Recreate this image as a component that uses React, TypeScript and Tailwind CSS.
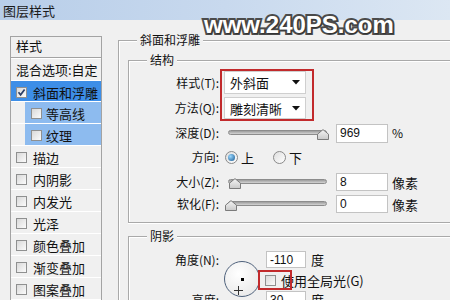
const SIDE_ITEMS = ["描边", "内阴影", "内发光", "光泽", "颜色叠加", "渐变叠加", "图案叠加"];

function Check({ checked }: { checked?: boolean }) {
  return (
    <span className="flex h-[11px] w-[11px] shrink-0 items-center justify-center border border-[#8f9090] bg-gradient-to-br from-[#d9d9d9] to-[#fbfbfb]">
      {checked && (
        <svg width="9" height="9" viewBox="0 0 9 9">
          <path d="M1.5 4.3 L3.6 6.8 L7.6 1.6" fill="none" stroke="#2b3e66" strokeWidth="1.7" />
        </svg>
      )}
    </span>
  );
}

function Radio({ on }: { on?: boolean }) {
  return (
    <span className="flex h-[13px] w-[13px] shrink-0 items-center justify-center rounded-full border border-[#8a8a8a] bg-gradient-to-br from-[#dedede] to-white">
      {on && (
        <span className="h-[7px] w-[7px] rounded-full bg-[radial-gradient(circle_at_35%_35%,#9ad8ff,#16578f)]" />
      )}
    </span>
  );
}

function Thumb({ className }: { className: string }) {
  return (
    <svg width="12" height="11" viewBox="0 0 12 11" className={`absolute top-[6px] ${className}`}>
      <defs>
        <linearGradient id="tg" x1="0" y1="0" x2="0" y2="1">
          <stop offset="0" stopColor="#f4f4f4" />
          <stop offset="1" stopColor="#c9c9c9" />
        </linearGradient>
      </defs>
      <path d="M0.5 10.5 V5.2 L6 0.6 L11.5 5.2 V10.5 Z" fill="url(#tg)" stroke="#7b7b7b" />
    </svg>
  );
}

function Slider({ thumb }: { thumb: string }) {
  return (
    <div className="relative ml-[9px] h-[20px] w-[99px] shrink-0">
      <div className="mt-[7px] h-[5px] w-full rounded-full border border-[#8c8c8c] bg-gradient-to-b from-[#9c9c9c] to-[#d4d4d4]" />
      <Thumb className={thumb} />
    </div>
  );
}

function NumBox({ value, className }: { value: string; className: string }) {
  return (
    <div
      className={`flex shrink-0 items-center border border-[#c3c3c3] bg-white pl-[3px] font-['Liberation_Sans',sans-serif] text-[12px] ${className}`}
    >
      {value}
    </div>
  );
}

function Select({ text, className }: { text: string; className: string }) {
  return (
    <div className={`flex w-[82px] items-center justify-between border border-[#cfcfcf] bg-white pl-[5px] pr-[5px] text-[13px] ${className}`}>
      <span>{text}</span>
      <svg width="8" height="5" viewBox="0 0 8 5">
        <path d="M0 0 H8 L4 4.5 Z" fill="#111" />
      </svg>
    </div>
  );
}

function Legend({ text, className }: { text: string; className: string }) {
  return (
    <div className={`-mt-[9px] w-fit bg-[#f0f0f0] px-[3px] text-[12px] leading-[16px] ${className}`}>{text}</div>
  );
}

function Sidebar() {
  return (
    <div className="ml-[10px] mt-[16px] h-[300px] w-[92px] shrink-0 whitespace-nowrap border border-[#a3a3a3] bg-[#f0f0f0] text-[13px]">
      <div className="flex h-[21px] items-center border-b border-[#a3a3a3] pb-[3px] pl-[5px]">样式</div>
      <div className="flex h-[23px] items-center border-b border-white pl-[5px] pt-[1px] shadow-[inset_0_1px_0_#fff]">
        混合选项:自定
      </div>
      <div className="flex h-[21px] items-center gap-[6px] border-b border-white bg-[#3d8ee7] pl-[5px] pt-[2px]">
        <Check checked />
        <span>斜面和浮雕</span>
      </div>
      {["等高线", "纹理"].map((t) => (
        <div key={t} className="flex h-[22px] border-b border-white">
          <div className="ml-[14px] flex flex-1 items-center gap-[4px] bg-[#8dbbef] pl-[6px] pt-[2px]">
            <Check />
            <span>{t}</span>
          </div>
        </div>
      ))}
      {SIDE_ITEMS.map((t) => (
        <div key={t} className="flex h-[22px] items-center gap-[6px] border-b border-white pl-[5px] pt-[2px]">
          <Check />
          <span>{t}</span>
        </div>
      ))}
    </div>
  );
}

export default function App() {
  return (
    <div className="relative h-[300px] w-[450px] overflow-hidden whitespace-nowrap bg-[#f0f0f0] font-['Noto_Sans_CJK_SC',sans-serif] leading-none text-[#111]">
      <div className="flex h-[20px] items-center bg-gradient-to-r from-[#b8cee9] via-[#c8d9ee] to-[#dce7f3] pl-[3px] text-[13px] text-[#1a1a1a]">
        图层样式
      </div>

      <div className="flex">
        <Sidebar />

        <div className="ml-[16px] mt-[20px] shrink-0 text-[12px]">
          <div className="h-[300px] w-[360px] border-l border-t border-[#a9a9a9] pl-[9px] shadow-[inset_1px_1px_0_#fff]">
            <Legend text="斜面和浮雕" className="ml-[9px]" />

            <div className="mt-[12px] w-[340px] border-b border-l border-t border-[#a9a9a9] pb-[8px] shadow-[inset_1px_1px_0_#fff,0_1px_0_#fff]">
              <Legend text="结构" className="ml-[18px]" />

              <div className="mt-[1px] flex">
                <div className="w-[90px] shrink-0 pt-[2px] text-right">
                  <div className="h-[23px] leading-[23px]">样式(T):</div>
                  <div className="mt-[3px] h-[22px] leading-[22px]">方法(Q):</div>
                </div>
                <div className="ml-[1px] flex flex-col gap-[3px] border-2 border-[#c22a2c] pl-[2px] pr-[6px]">
                  <Select text="外斜面" className="h-[23px]" />
                  <Select text="雕刻清晰" className="h-[22px]" />
                </div>
              </div>

              <div className="mt-[2px] flex h-[20px] items-center">
                <div className="w-[90px] shrink-0 text-right">深度(D):</div>
                <Slider thumb="left-[89px]" />
                <NumBox value="969" className="ml-[9px] h-[19px] w-[52px]" />
                <span className="ml-[4px]">%</span>
              </div>

              <div className="mt-[4px] flex h-[20px] items-center">
                <div className="w-[90px] shrink-0 text-right">方向:</div>
                <span className="ml-[6px]"><Radio on /></span>
                <span className="ml-[3px] text-[13px]">上</span>
                <span className="ml-[19px]"><Radio /></span>
                <span className="ml-[3px] text-[13px]">下</span>
              </div>

              <div className="mt-[5px] flex h-[20px] items-center">
                <div className="w-[90px] shrink-0 text-right">大小(Z):</div>
                <Slider thumb="left-[1px]" />
                <NumBox value="8" className="ml-[9px] h-[18px] w-[52px]" />
                <span className="ml-[4px] text-[13px]">像素</span>
              </div>

              <div className="mt-[2px] flex h-[20px] items-center">
                <div className="w-[90px] shrink-0 text-right">软化(F):</div>
                <Slider thumb="-left-[3px]" />
                <NumBox value="0" className="ml-[9px] h-[18px] w-[52px]" />
                <span className="ml-[4px] text-[13px]">像素</span>
              </div>
            </div>

            <div className="mt-[13px] h-[100px] w-[340px] border-l border-t border-[#a9a9a9] shadow-[inset_1px_1px_0_#fff]">
              <Legend text="阴影" className="ml-[18px]" />

              <div className="mt-[7px] flex">
                <div className="w-[90px] shrink-0 text-right">
                  <div className="flex h-[17px] items-center justify-end">角度(N):</div>
                  <div className="mt-[23px] flex h-[17px] items-center justify-end">高度:</div>
                </div>

                <div className="w-[40px] shrink-0 pl-[5px]">
                  <div className="relative mt-[10px] h-[36px] w-[36px] rounded-full border-[1.5px] border-[#4f627c] bg-[radial-gradient(circle_at_40%_35%,#ffffff,#e4e4e4)]">
                    <span className="absolute left-[16px] top-[16px] h-[3px] w-[3px] bg-black" />
                    <svg width="9" height="9" viewBox="0 0 9 9" className="absolute left-[9px] top-[24px]">
                      <path d="M4.5 0 V9 M0 4.5 H9" stroke="#333" strokeWidth="1" />
                    </svg>
                  </div>
                </div>

                <div className="-ml-[1px] flex flex-col">
                  <div className="flex h-[17px] items-center">
                    <NumBox value="-110" className="ml-[8px] h-[17px] w-[40px]" />
                    <span className="ml-[5px] text-[13px]">度</span>
                  </div>
                  <div className="relative mt-[4px] flex h-[17px] items-center pl-[7px]">
                    <Check />
                    <span className="ml-[5px] text-[13px]">使用全局光(G)</span>
                    <div className="absolute -top-[2px] left-0 h-[20px] w-[34px] border-2 border-[#c22a2c]" />
                  </div>
                  <div className="mt-[2px] flex h-[17px] items-center">
                    <NumBox value="30" className="ml-[8px] h-[17px] w-[40px]" />
                    <span className="ml-[5px] text-[13px]">度</span>
                  </div>
                </div>
              </div>
            </div>
          </div>
        </div>
      </div>

      <div className="absolute left-[204px] top-[13px] font-['Liberation_Sans',Arial,sans-serif] text-[24px] font-bold leading-none text-white [-webkit-text-stroke:4px_#4b4b4b] [paint-order:stroke_fill] [text-shadow:1px_1px_1px_rgba(0,0,0,0.35)]">
        www.240PS.com
      </div>
    </div>
  );
}
